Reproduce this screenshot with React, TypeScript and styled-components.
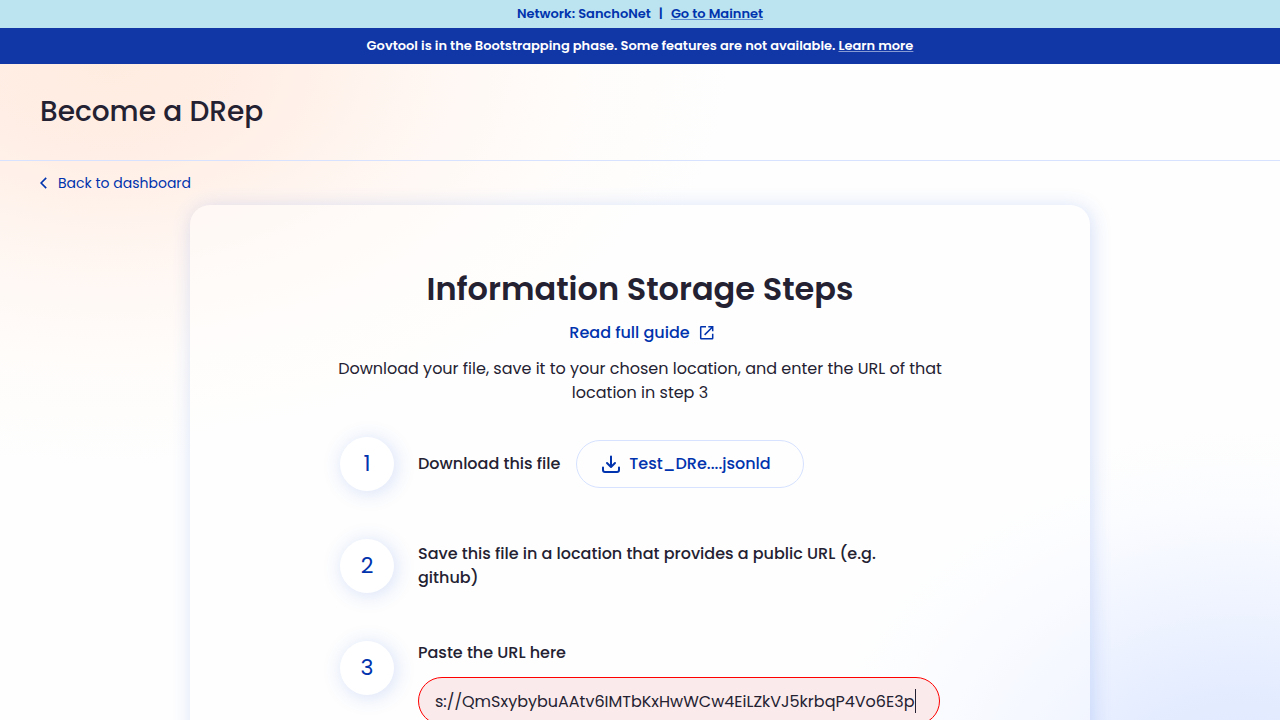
import React from "react";
import styled, { createGlobalStyle } from "styled-components";

const ink = "#242232";
const blue = "#0033AD";
const paleBlue = "#D6E2FF";

const GlobalStyle = createGlobalStyle`
  *, *::before, *::after { box-sizing: border-box; }
  body {
    margin: 0;
    color: ${ink};
    font-family: Poppins, Inter, "Liberation Sans", sans-serif;
    font-size: 16px;
    line-height: 24px;
    background:
      radial-gradient(ellipse 620px 400px at 110px 64px, #FFECE1 0%, #FFEEE5 22%, #FFF6F1 48%, #FFFCFA 74%, rgba(255, 255, 255, 0) 100%),
      radial-gradient(ellipse 460px 360px at 1240px 790px, #DDE7FF 0%, #E4ECFF 28%, #F1F5FF 56%, #FBFCFF 80%, rgba(255, 255, 255, 0) 100%),
      #FEFEFE;
    background-attachment: fixed;
  }
  h1, h2, p, ol { margin: 0; padding: 0; }
  button, input { font: inherit; }
`;

const NetworkBar = styled.div`
  display: flex;
  justify-content: center;
  align-items: center;
  gap: 8px;
  height: 28px;
  background: #BBE3F0;
  color: ${blue};
  font-size: 13px;
  font-weight: 600;
  line-height: 16px;
`;

const PhaseBar = styled(NetworkBar)`
  gap: 3px;
  height: 36px;
  background: #1136A6;
  color: #FFFFFF;
`;

const BannerLink = styled.a`
  color: inherit;
  text-decoration: underline;
  text-decoration-thickness: 1px;
  text-underline-offset: 1px;
  text-decoration-color: color-mix(in srgb, currentColor 50%, transparent);
`;

const Header = styled.header`
  display: flex;
  align-items: center;
  height: 97px;
  padding: 0 40px;
  border-bottom: 1px solid ${paleBlue};
`;

const PageTitle = styled.h1`
  font-size: 28px;
  font-weight: 500;
  line-height: 40px;
`;

const BackLink = styled.a`
  display: inline-flex;
  align-items: center;
  gap: 11px;
  margin: 12px 40px;
  color: ${blue};
  font-size: 14px;
  line-height: 20px;
  text-decoration: none;
`;

const Card = styled.main`
  display: flex;
  flex-direction: column;
  align-items: center;
  max-width: 900px;
  margin: 0 auto 48px;
  padding: 60px 24px 64px;
  border-radius: 20px;
  background: rgba(255, 255, 255, 0.4);
  box-shadow: 2px 2px 20px 0 rgba(47, 98, 220, 0.2);
`;

const CardTitle = styled.h2`
  font-size: 32px;
  font-weight: 600;
  line-height: 48px;
  text-align: center;
`;

const GuideLink = styled.a`
  display: flex;
  align-items: center;
  gap: 9px;
  margin-top: 8px;
  padding-left: 4px;
  color: ${blue};
  font-weight: 500;
  text-decoration: none;
`;

const Intro = styled.p`
  max-width: 624px;
  margin-top: 12px;
  text-align: center;
`;

const Steps = styled.ol`
  display: flex;
  flex-direction: column;
  gap: 48px;
  width: 100%;
  max-width: 600px;
  margin-top: 32px;
  list-style: none;
`;

const Step = styled.li`
  display: flex;
  align-items: flex-start;
  gap: 24px;
`;

const StepNumber = styled.span`
  display: flex;
  flex: none;
  align-items: center;
  justify-content: center;
  width: 54px;
  height: 54px;
  border-radius: 50%;
  background: #FFFFFF;
  box-shadow: 2px 2px 20px 0 rgba(47, 98, 220, 0.2);
  color: ${blue};
  font-size: 22px;
  line-height: 28px;
`;

const StepBody = styled.div<{ $stacked?: boolean }>`
  display: flex;
  flex: 1;
  flex-direction: ${({ $stacked }) => ($stacked ? "column" : "row")};
  align-items: ${({ $stacked }) => ($stacked ? "stretch" : "center")};
  gap: ${({ $stacked }) => ($stacked ? "12px" : "16px")};
  min-width: 0;
  min-height: 54px;
  font-weight: 500;
`;

const DownloadButton = styled.button`
  display: flex;
  align-items: center;
  gap: 6px;
  height: 48px;
  padding: 0 32px 0 22px;
  border: 1px solid ${paleBlue};
  border-radius: 24px;
  background: transparent;
  color: ${blue};
  font-weight: 500;
  cursor: pointer;
`;

const UrlField = styled.div`
  position: relative;
`;

const UrlInput = styled.input`
  display: block;
  width: 100%;
  height: 48px;
  padding: 0 16px;
  border: 1px solid #FF0000;
  border-radius: 24px;
  outline: none;
  background: #FAEAEB;
  color: ${ink};
  font-weight: 400;
  caret-color: transparent;
`;

const Caret = styled.span`
  position: absolute;
  top: 12px;
  right: 24px;
  width: 1px;
  height: 24px;
  background: ${ink};
  pointer-events: none;
`;

const ChevronIcon = () => (
  <svg width="7" height="12" viewBox="0 0 7 12" fill="none" stroke={blue} strokeWidth="1.6" aria-hidden="true">
    <path d="M6.2 0.9 1.1 6l5.1 5.1" />
  </svg>
);

const OpenIcon = () => (
  <svg width="16" height="16" viewBox="0 0 16 16" fill="none" stroke={blue} strokeWidth="1.5" aria-hidden="true">
    <path d="M7 1.8H2.2a.5.5 0 0 0-.5.5v11a.5.5 0 0 0 .5.5h11a.5.5 0 0 0 .5-.5V8.7" />
    <path d="M9.3 1.8h4.4v4.5M13.5 2 5.6 9.9" />
  </svg>
);

const DownloadIcon = () => (
  <svg width="24" height="24" viewBox="0 0 24 24" fill="none" stroke={blue} strokeWidth="2" strokeLinecap="round" strokeLinejoin="round" aria-hidden="true">
    <path d="M12 4.5v10M8 11l4 4 4-4" />
    <path d="M4 15.5v2.5a2 2 0 0 0 2 2h12a2 2 0 0 0 2-2v-2.5" />
  </svg>
);

export default function App() {
  return (
    <>
      <GlobalStyle />
      <NetworkBar>
        <span>Network: SanchoNet</span>
        <span>|</span>
        <BannerLink href="#mainnet">Go to Mainnet</BannerLink>
      </NetworkBar>
      <PhaseBar>
        <span>Govtool is in the Bootstrapping phase. Some features are not available.</span>
        <BannerLink href="#bootstrapping">Learn more</BannerLink>
      </PhaseBar>
      <Header>
        <PageTitle>Become a DRep</PageTitle>
      </Header>
      <BackLink href="#dashboard">
        <ChevronIcon />
        Back to dashboard
      </BackLink>
      <Card>
        <CardTitle>Information Storage Steps</CardTitle>
        <GuideLink href="#guide">
          Read full guide
          <OpenIcon />
        </GuideLink>
        <Intro>
          Download your file, save it to your chosen location, and enter the URL of that location in step 3
        </Intro>
        <Steps>
          <Step>
            <StepNumber>1</StepNumber>
            <StepBody>
              <span>Download this file</span>
              <DownloadButton type="button">
                <DownloadIcon />
                Test_DRe....jsonld
              </DownloadButton>
            </StepBody>
          </Step>
          <Step>
            <StepNumber>2</StepNumber>
            <StepBody>Save this file in a location that provides a public URL (e.g. github)</StepBody>
          </Step>
          <Step>
            <StepNumber>3</StepNumber>
            <StepBody $stacked>
              <label htmlFor="metadata-url">Paste the URL here</label>
              <UrlField>
                <UrlInput
                  id="metadata-url"
                  type="text"
                  defaultValue="s://QmSxybybuAAtv6IMTbKxHwWCw4EiLZkVJ5krbqP4Vo6E3p"
                />
                <Caret />
              </UrlField>
            </StepBody>
          </Step>
        </Steps>
      </Card>
    </>
  );
}
